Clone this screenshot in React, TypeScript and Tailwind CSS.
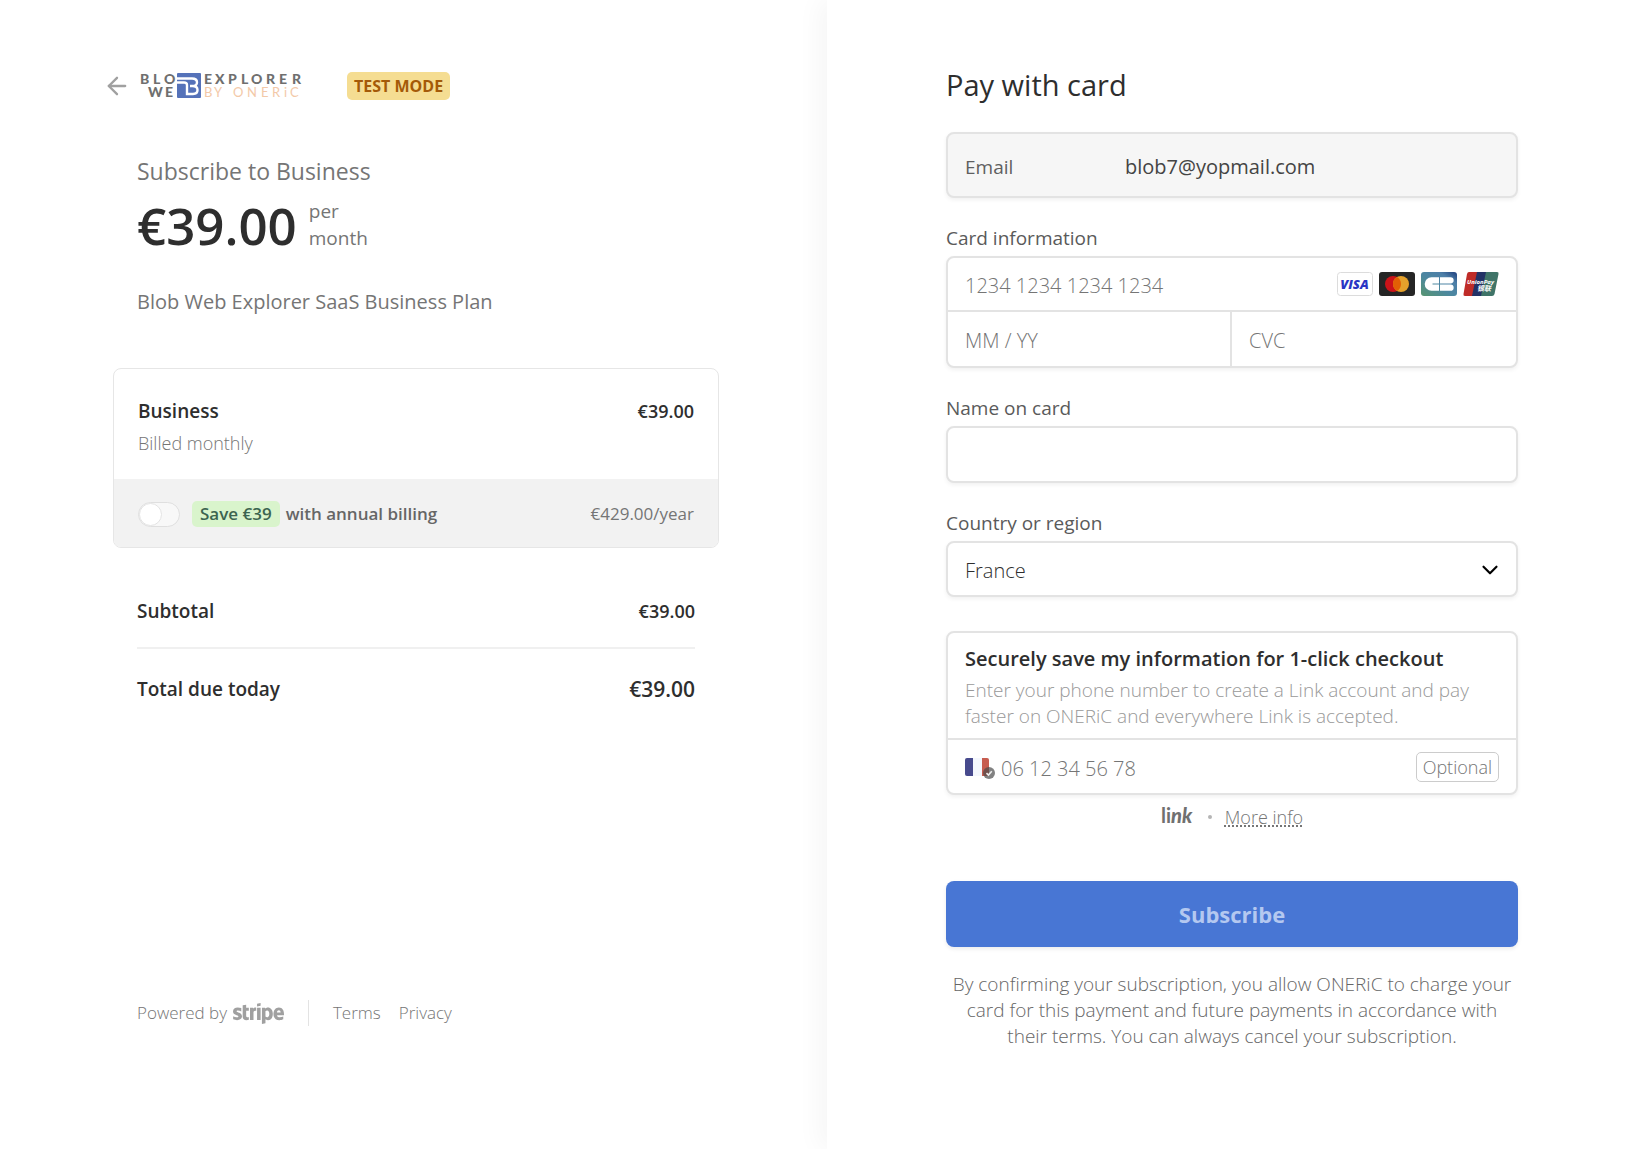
import type { ReactNode } from "react";
import { ArrowLeft, ChevronDown } from "lucide-react";
import { FaStripe } from "react-icons/fa";

const BrandLogo = () => (
    <svg className="shrink-0 overflow-visible" width="164" height="28" viewBox="0 0 164 28" role="img" aria-label="Blob Web Explorer by ONERiC">
        <g fontFamily="Lato, sans-serif" fontWeight="900" fontSize="14" fill="#6f6f6f">
            <text x="1 14 25" y="12">BLO</text>
            <text x="9 26" y="25">WE</text>
            <text x="65 76 89 102 112 127 140 153" y="12">EXPLORER</text>
        </g>
        <text x="65 75 85 94 108 122 133 145 151" y="25" fontFamily="Lato, sans-serif" fontWeight="400" fontSize="13" fill="#f3c9a8">
            BY ONERiC
        </text>
        <rect x="38" y="1" width="24" height="25" rx="1" fill="#5572b9" />
        <path
            d="M38 6.500H53Q58 6.500 58 10.200Q58 14 53.500 14H51M53.500 14Q58.500 14 58.500 18Q58.500 22 54 22H48V13Q48 10.500 45 10.500H38"
            fill="none"
            stroke="#fff"
            strokeWidth="2.400"
        />
    </svg>
);

const VisaIcon = () => (
    <svg width="36" height="24" viewBox="0 0 36 24" role="img" aria-label="Visa">
        <rect x="0.5" y="0.5" width="35" height="23" rx="3" fill="#fff" stroke="#dcdcdc" />
        <text x="17.500" y="17" textAnchor="middle" fontFamily="Open Sans, sans-serif" fontWeight="800" fontStyle="italic" fontSize="13" fill="#2a35c4">
            VISA
        </text>
    </svg>
);

const MastercardIcon = () => (
    <svg width="36" height="24" viewBox="0 0 36 24" role="img" aria-label="Mastercard">
        <rect width="36" height="24" rx="3" fill="#252525" />
        <circle cx="14" cy="12" r="8" fill="#cb1319" />
        <circle cx="22" cy="12" r="8" fill="#e5a12b" />
        <path d="M18 5.070a8 8 0 0 1 0 13.860a8 8 0 0 1 0-13.860z" fill="#e26005" />
    </svg>
);

const CartesBancairesIcon = () => (
    <svg width="36" height="24" viewBox="0 0 36 24" role="img" aria-label="Cartes Bancaires">
        <defs>
            <linearGradient id="cb" x1="0" y1="1" x2="1" y2="0">
                <stop offset="0" stopColor="#57956f" />
                <stop offset="0.45" stopColor="#4c87a0" />
                <stop offset="0.75" stopColor="#4d7fa8" />
                <stop offset="1" stopColor="#1f3f7d" />
            </linearGradient>
        </defs>
        <rect width="36" height="24" rx="3" fill="url(#cb)" />
        <path d="M18 11.500V5.200H10.500a6.800 6.800 0 0 0 0 13.600H18V12.500H11.500v-1z" fill="#fff" />
        <path d="M19 5.200h10.500a3.150 3.150 0 0 1 0 6.300H19zM19 12.500h10.500a3.150 3.150 0 0 1 0 6.300H19z" fill="#fff" />
    </svg>
);

const UnionPayIcon = () => (
    <svg width="36" height="24" viewBox="0 0 36 24" role="img" aria-label="UnionPay">
        <path d="M6 0H15L10 24H2Q0 24 .5 22L4 2Q4.500 0 6 0z" fill="#bf2c28" />
        <path d="M14 0H24L19 24H9z" fill="#233266" />
        <path d="M23 0H34Q36 0 35.500 2L31.500 22Q31 24 29 24H18z" fill="#3f7468" />
        <g fontStyle="italic" fontWeight="700" fill="#fff">
            <text x="4" y="12" fontFamily="Open Sans, sans-serif" fontSize="6">UnionPay</text>
            <text x="14" y="19" fontFamily="Noto Sans CJK SC, sans-serif" fontSize="7">银联</text>
        </g>
    </svg>
);

const FrenchFlag = () => (
    <svg className="shrink-0" width="30" height="24" viewBox="0 0 30 24" aria-hidden="true">
        <rect x="0" y="3" width="24" height="18" rx="2" fill="#f4f7fd" />
        <path d="M2 3H8V21H2Q0 21 0 19V5Q0 3 2 3z" fill="#474a8d" />
        <path d="M17 3H22Q24 3 24 5V19Q24 21 22 21H17z" fill="#c75c4f" />
        <circle cx="24" cy="18" r="6" fill="#4b4b4b" fillOpacity="0.7" />
        <path d="M21.500 18.200L23.400 20L26.800 16.200" fill="none" stroke="#eee" strokeWidth="1.600" />
    </svg>
);

const LinkLogo = () => (
    <svg width="34" height="28" viewBox="0 0 34 28" role="img" aria-label="link">
        <text x="0" y="20" fontFamily="Lato, sans-serif" fontWeight="700" fontSize="20" fill="#707070">
            li<tspan fontStyle="italic" fontWeight="900">nk</tspan>
        </text>
    </svg>
);

const box = "rounded-lg border-2 border-[#e3e3e3] bg-white shadow-[0_2px_4px_rgba(0,0,0,0.06)]";
const input = "w-full min-w-0 bg-transparent pt-1 text-[20px] leading-6 font-light text-[#2e2e2e] outline-none placeholder:text-[#757575]";

const Field = ({ id, label, children }: { id: string; label: string; children: ReactNode }) => (
    <div className="mt-[26px]">
        <label htmlFor={id} className="mb-1 block text-[19px] leading-7 text-[#5a5a5a]">{label}</label>
        {children}
    </div>
);

function OrderSummary() {
    return (
        <section className="flex justify-end pt-[72px] pr-[108px] pb-[122px] pl-8">
            <div className="flex w-full max-w-[606px] flex-col">
                <header className="-ml-[10px] flex h-7 items-center">
                    <a href="#back" aria-label="Back" className="mr-2 text-[#a0a0a0]">
                        <ArrowLeft size={28} strokeWidth={2} />
                    </a>
                    <BrandLogo />
                    <span className="ml-11 rounded-[5px] bg-[#f5dd92] px-[7px] text-base leading-7 font-bold text-[#a45a08]">
                        TEST MODE
                    </span>
                </header>

                <div className="mt-[55px] px-6 text-[#757575]">
                    <h1 className="text-[23px] leading-8">Subscribe to Business</h1>
                    <div className="mt-[2px] flex items-center gap-3">
                        <span className="text-[51px] leading-[72px] font-semibold text-[#2e2e2e]">€39.00</span>
                        <span className="text-[19px] leading-[27px]">per<br />month</span>
                    </div>
                    <p className="mt-[27px] text-[20px] leading-7">Blob Web Explorer SaaS Business Plan</p>
                </div>

                <div className="mt-[52px] overflow-hidden rounded-lg border border-[#e6e6e6]">
                    <div className="px-6 pt-7 pb-[22px]">
                        <div className="flex justify-between text-[19px] leading-7 font-semibold text-[#2e2e2e]">
                            <span>Business</span>
                            <span className="text-[18px]">€39.00</span>
                        </div>
                        <p className="mt-1 text-[18px] leading-7 font-light text-[#757575]">Billed monthly</p>
                    </div>
                    <div className="flex items-center bg-[#f2f2f2] px-6 pt-[21px] pb-[19px] leading-7">
                        <input
                            id="annual"
                            type="checkbox"
                            className="h-[25px] w-[42px] appearance-none rounded-full border border-[#dfdfdf] bg-[#f8f8f8] before:block before:size-[23px] before:rounded-full before:border before:border-[#e3e3e3] before:bg-white"
                        />
                        <label htmlFor="annual" className="ml-3 text-[17px] font-semibold text-[#666]">
                            <span className="mr-[6px] inline-block rounded-[5px] bg-[#d9f4cc] px-2 leading-[26px] text-[#3c6450]">Save €39</span>
                            with annual billing
                        </label>
                        <span className="ml-auto text-[17px] text-[#757575]">€429.00/year</span>
                    </div>
                </div>

                <div className="mx-6 mt-9 text-[19px] font-semibold text-[#2e2e2e]">
                    <div className="flex items-center justify-between border-b-2 border-[#f0f0f0] pt-[13px] pb-[22px] leading-7">
                        <span>Subtotal</span>
                        <span className="text-[18px]">€39.00</span>
                    </div>
                    <div className="flex items-center justify-between pt-[26px] leading-7">
                        <span>Total due today</span>
                        <span className="text-[21px]">€39.00</span>
                    </div>
                </div>

                <footer className="mt-auto flex h-7 items-center px-6 text-[17px] font-light text-[#757575]">
                    <a href="#stripe" className="flex items-center gap-[6px]">
                        Powered by
                        <FaStripe size={51} className="text-[#a0a0a0]" aria-label="Stripe" />
                    </a>
                    <a href="#terms" className="ml-6 border-l border-[#e3e3e3] pl-6">Terms</a>
                    <a href="#privacy" className="ml-[18px]">Privacy</a>
                </footer>
            </div>
        </section>
    );
}

function PaymentForm() {
    return (
        <section className="bg-white pt-[65px] pr-8 pb-24 pl-[119px] shadow-[-8px_0_24px_rgba(0,0,0,0.04)]">
            <form className="w-full max-w-[572px]">
                <h2 className="text-[29px] leading-10 text-[#2e2e2e]">Pay with card</h2>

                <div className="mt-[27px]">
                    <div className="flex items-center rounded-lg border-2 border-[#e3e3e3] bg-[#f6f6f6] px-[17px] pt-[21px] pb-[17px] shadow-[0_2px_4px_rgba(0,0,0,0.06)]">
                        <label htmlFor="email" className="w-40 shrink-0 text-[19px] leading-6 text-[#5f5f5f]">Email</label>
                        <input
                            id="email"
                            type="email"
                            readOnly
                            defaultValue="blob7@yopmail.com"
                            className="w-full min-w-0 bg-transparent text-[20px] leading-6 text-[#444] outline-none"
                        />
                    </div>
                </div>

                <Field id="card" label="Card information">
                    <div className={box}>
                        <div className="flex h-[54px] items-center border-b-2 border-[#e3e3e3] px-[17px]">
                            <input id="card" placeholder="1234 1234 1234 1234" className={input} />
                            <div className="flex shrink-0 gap-[6px]">
                                <VisaIcon />
                                <MastercardIcon />
                                <CartesBancairesIcon />
                                <UnionPayIcon />
                            </div>
                        </div>
                        <div className="grid h-[54px] grid-cols-2">
                            <div className="flex items-center border-r-2 border-[#e3e3e3] px-[17px]">
                                <input aria-label="Expiration" placeholder="MM / YY" className={input} />
                            </div>
                            <div className="flex items-center px-[17px]">
                                <input aria-label="CVC" placeholder="CVC" className={input} />
                            </div>
                        </div>
                    </div>
                </Field>

                <Field id="name" label="Name on card">
                    <div className={`${box} px-[17px] py-3`}>
                        <input id="name" className={input} />
                    </div>
                </Field>

                <Field id="country" label="Country or region">
                    <div className={`${box} relative`}>
                        <select id="country" className="block h-[52px] w-full appearance-none bg-transparent px-[17px] pt-1 text-[20px] font-light text-[#2e2e2e] outline-none">
                            <option>France</option>
                        </select>
                        <ChevronDown size={26} className="pointer-events-none absolute top-[14px] right-[13px] text-black" />
                    </div>
                </Field>

                <div className={`${box} mt-[34px]`}>
                    <div className="border-b-2 border-[#e3e3e3] px-[17px] pt-3 pb-[9px]">
                        <p className="text-[20px] leading-7 font-semibold text-[#2e2e2e]">Securely save my information for 1-click checkout</p>
                        <p className="mt-1 text-[19px] leading-[26px] font-light text-[#999]">
                            Enter your phone number to create a Link account and pay faster on ONERiC and everywhere Link is accepted.
                        </p>
                    </div>
                    <div className="flex h-[53px] items-center gap-[6px] px-[17px]">
                        <FrenchFlag />
                        <input aria-label="Phone number" type="tel" placeholder="06 12 34 56 78" className={input} />
                        <span className="rounded-[5px] border border-[#ccc] px-[6px] text-[18px] leading-7 font-light text-[#757575]">Optional</span>
                    </div>
                </div>

                <div className="mt-2 flex items-center justify-center gap-[13px] leading-7">
                    <LinkLogo />
                    <span className="size-1 rounded-full bg-[#b5b5b5]" />
                    <a href="#more" className="text-[18px] font-light text-[#757575] underline decoration-dotted underline-offset-2">More info</a>
                </div>

                <button type="submit" className="mt-[50px] block h-[66px] w-full rounded-lg bg-[#4876d4] text-[22px] font-bold text-[#b4c8f0] shadow-[0_2px_4px_rgba(0,0,0,0.08)]">
                    Subscribe
                </button>

                <p className="mt-6 text-center text-[19px] leading-[26px] font-light text-[#666]">
                    By confirming your subscription, you allow ONERiC to charge your card for this payment and future payments in accordance with their terms. You can always cancel your subscription.
                </p>
            </form>
        </section>
    );
}

export default function App() {
    return (
        <main className="grid min-h-screen grid-cols-[827fr_809fr] overflow-hidden bg-white font-['Open_Sans',sans-serif]">
            <OrderSummary />
            <PaymentForm />
        </main>
    );
}
